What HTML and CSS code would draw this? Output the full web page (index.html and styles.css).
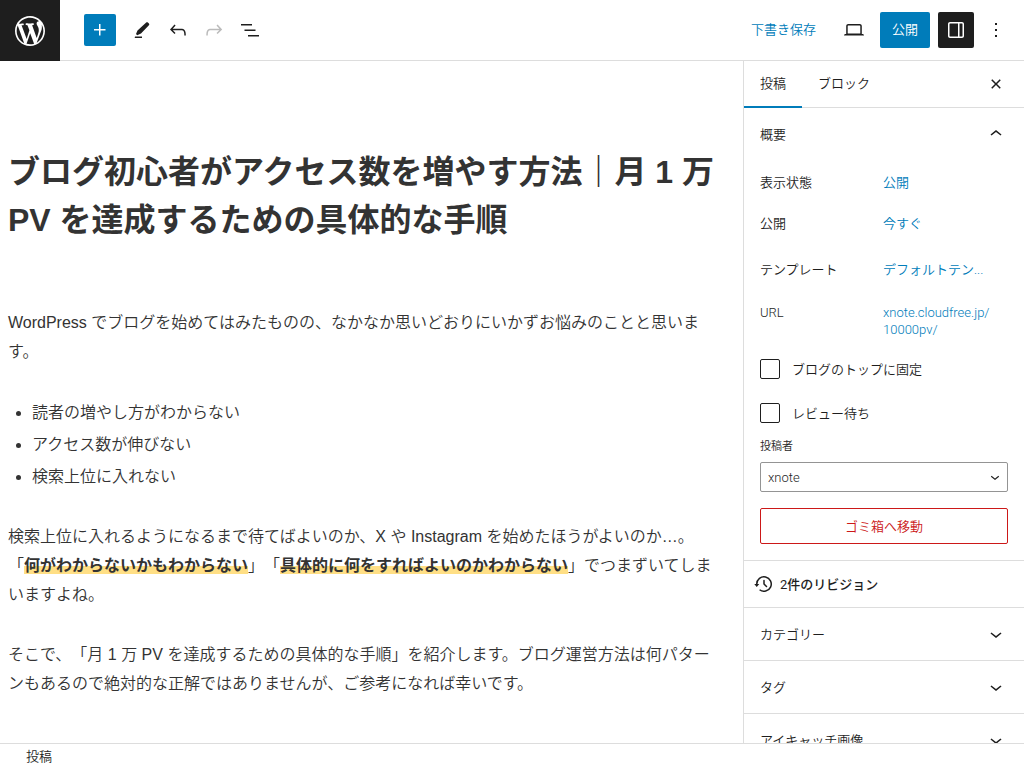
FILE: index.html
```html
<!DOCTYPE html>
<html lang="ja">
<head>
<meta charset="utf-8">
<title>投稿を編集</title>
<link rel="stylesheet" href="styles.css">
</head>
<body>
<div class="editor">
  <header class="header">
    <a class="site-logo" href="#" aria-label="投稿一覧">
      <svg class="logo" viewBox="-2 -2 24 24"><path d="M20 10c0-5.51-4.49-10-10-10C4.48 0 0 4.49 0 10c0 5.52 4.48 10 10 10 5.51 0 10-4.48 10-10zM7.78 15.37L4.37 6.22c.55-.02 1.17-.08 1.17-.08.5-.06.44-1.13-.06-1.11 0 0-1.45.11-2.37.11-.18 0-.37 0-.58-.01C4.12 2.69 6.87 1.11 10 1.11c2.33 0 4.45.87 6.05 2.34-.68-.11-1.65.39-1.65 1.58 0 .74.45 1.36.9 2.1.35.61.55 1.36.55 2.46 0 1.49-1.4 5-1.4 5l-3.03-8.37c.54-.02.82-.17.82-.17.5-.05.44-1.25-.06-1.22 0 0-1.44.12-2.38.12-.87 0-2.33-.12-2.33-.12-.5-.03-.56 1.2-.06 1.22l.92.08 1.26 3.41zM17.41 10c.24-.64.74-1.87.43-4.25.7 1.29 1.05 2.71 1.05 4.25 0 3.29-1.73 6.24-4.4 7.78.97-2.59 1.94-5.2 2.92-7.78zM6.1 18.09C3.12 16.65 1.11 13.53 1.11 10c0-1.3.23-2.48.72-3.59C3.25 10.3 4.67 14.2 6.1 18.09zm4.03-6.63l2.58 6.98c-.86.29-1.76.45-2.71.45-.79 0-1.57-.11-2.29-.33.81-2.38 1.62-4.74 2.42-7.1z"/></svg>
    </a>
    <div class="tools">
      <button class="inserter" type="button" aria-label="ブロックを追加"><svg class="icon" viewBox="0 0 24 24"><path d="M11 12.5V17.5H12.5V12.5H17.5V11H12.5V6H11V11H6V12.5H11Z"/></svg></button>
      <div class="tool-group">
        <button class="icon-button" type="button" aria-label="ツール"><svg class="icon" viewBox="0 0 24 24"><path d="M16.2 4.500c.5-.5 1.200-.5 1.700 0l1 1c.5.5.5 1.200 0 1.700L11 15.500l-3.800 1.700-1.200-1.200L7.500 12.500zM5 18.500h7V20H4.700z"/></svg></button>
        <button class="icon-button" type="button" aria-label="元に戻す"><svg class="icon" viewBox="0 0 24 24"><path d="M18.3 11.7c-.6-.6-1.4-.9-2.3-.9H6.7l2.9-3.3-1.1-1-4.5 5L8.5 16l1-1-2.7-2.7H16c.5 0 .9.2 1.3.5 1 1 1 3.4 1 4.5v.3h1.5v-.2c0-1.5 0-4.3-1.5-5.7z"/></svg></button>
        <button class="icon-button" type="button" aria-label="やり直す" disabled><svg class="icon" viewBox="0 0 24 24"><path d="M15.6 6.5l-1.1 1 2.9 3.3H8c-.9 0-1.7.3-2.3.9-1.4 1.5-1.4 4.2-1.4 5.6v.2h1.5v-.3c0-1.1 0-3.5 1-4.5.3-.3.7-.5 1.3-.5h9.2L14.5 15l1.1 1.1 4.6-4.6-4.6-5z"/></svg></button>
        <button class="icon-button" type="button" aria-label="リスト表示"><svg class="icon" viewBox="0 0 24 24"><path d="M3 6h11v1.5H3V6Zm3.5 5.5h11V13h-11v-1.5ZM21 17H10v1.5h11V17Z"/></svg></button>
      </div>
    </div>
    <div class="actions">
      <button class="save-draft" type="button">下書き保存</button>
      <button class="icon-button" type="button" aria-label="プレビュー"><svg class="icon" viewBox="0 0 24 24"><path d="M20.5 16h-.7V8c0-1.1-.9-2-2-2H6.2c-1.1 0-2 .9-2 2v8h-.7c-.8 0-1.5.7-1.5 1.5h20c0-.8-.7-1.5-1.5-1.5zM5.7 8c0-.3.2-.5.5-.5h11.6c.3 0 .5.2.5.5v7.6H5.7V8z"/></svg></button>
      <button class="publish" type="button">公開</button>
      <button class="icon-button is-pressed" type="button" aria-label="設定"><svg class="icon" viewBox="0 0 24 24"><path d="M18 4H6c-1.1 0-2 .9-2 2v12c0 1.1.9 2 2 2h12c1.1 0 2-.9 2-2V6c0-1.1-.9-2-2-2zm-4 14.5H6c-.3 0-.5-.2-.5-.5V6c0-.3.2-.5.5-.5h8v13zm4.5-.5c0 .3-.2.5-.5.5h-2.5v-13H18c.3 0 .5.2.5.5v12z"/></svg></button>
      <button class="icon-button is-narrow" type="button" aria-label="オプション"><svg class="icon" viewBox="0 0 24 24"><path d="M13 19h-2v-2h2v2zm0-6h-2v-2h2v2zm0-6h-2V5h2v2z"/></svg></button>
    </div>
  </header>

  <div class="body">
    <main class="canvas">
      <h1 class="title">ブログ初心者がアクセス数を増やす方法｜月 1 万<br>PV を達成するための具体的な手順</h1>
      <p class="paragraph">WordPress でブログを始めてはみたものの、なかなか思いどおりにいかずお悩みのことと思いま<br>す。</p>
      <ul class="list">
        <li>読者の増やし方がわからない</li>
        <li>アクセス数が伸びない</li>
        <li>検索上位に入れない</li>
      </ul>
      <p class="paragraph">検索上位に入れるようになるまで待てばよいのか、X や Instagram を始めたほうがよいのか…。<br>「<strong class="marker">何がわからないかもわからない</strong>」「<strong class="marker">具体的に何をすればよいのかわからない</strong>」でつまずいてしま<br>いますよね。</p>
      <p class="paragraph">そこで、「月 1 万 PV を達成するための具体的な手順」を紹介します。ブログ運営方法は何パター<br>ンもあるので絶対的な正解ではありませんが、ご参考になれば幸いです。</p>
    </main>

    <aside class="sidebar">
      <div class="tabs">
        <button class="tab is-active" type="button">投稿</button>
        <button class="tab" type="button">ブロック</button>
        <button class="close" type="button" aria-label="設定を閉じる"><svg class="icon" viewBox="0 0 24 24"><path d="M12 13.06l3.712 3.713 1.061-1.06L13.061 12l3.712-3.712-1.06-1.06L12 10.938 8.288 7.227l-1.061 1.06L10.939 12l-3.712 3.712 1.06 1.061L12 13.061z"/></svg></button>
      </div>
      <section class="summary">
        <button class="panel-toggle" type="button">概要<svg class="icon" viewBox="0 0 24 24"><path d="M6.5 12.4L12 8l5.5 4.4-.9 1.2L12 10l-4.5 3.6-1-1.2z"/></svg></button>
        <div class="summary-content">
          <div class="row"><span class="row-label">表示状態</span><a class="row-value" href="#">公開</a></div>
          <div class="row"><span class="row-label">公開</span><a class="row-value" href="#">今すぐ</a></div>
          <div class="row is-tall"><span class="row-label">テンプレート</span><a class="row-value" href="#">デフォルトテン...</a></div>
          <div class="row is-tall"><span class="row-label">URL</span><a class="row-value" href="#">xnote.cloudfree.jp/<wbr>10000pv/</a></div>
          <label class="check"><input class="checkbox" type="checkbox">ブログのトップに固定</label>
          <label class="check"><input class="checkbox" type="checkbox">レビュー待ち</label>
          <div class="field">
            <label class="field-label" for="author">投稿者</label>
            <div class="select-wrap">
              <select class="select" id="author"><option>xnote</option></select>
              <svg class="select-arrow" viewBox="0 0 24 24"><path d="M17.5 11.6L12 16l-5.5-4.4.9-1.2L12 14l4.5-3.6 1 1.2z"/></svg>
            </div>
          </div>
          <button class="trash" type="button">ゴミ箱へ移動</button>
        </div>
      </section>
      <button class="revisions" type="button"><svg class="icon" viewBox="0 0 24 24"><path d="M5.5 12h1.75l-2.5 3-2.5-3H4a8 8 0 113.134 6.35l.907-1.194A6.5 6.5 0 105.5 12zm9.53 1.97l-2.28-2.28V8.5a.75.75 0 00-1.5 0V12a.747.747 0 00.218.529l1.282-.84-1.28.842 2.5 2.5a.75.75 0 101.06-1.061z"/></svg><span><span class="count">2</span>件のリビジョン</span></button>
      <button class="panel-toggle has-border" type="button">カテゴリー<svg class="icon" viewBox="0 0 24 24"><path d="M17.5 11.6L12 16l-5.5-4.4.9-1.2L12 14l4.5-3.6 1 1.2z"/></svg></button>
      <button class="panel-toggle has-border" type="button">タグ<svg class="icon" viewBox="0 0 24 24"><path d="M17.5 11.6L12 16l-5.5-4.4.9-1.2L12 14l4.5-3.6 1 1.2z"/></svg></button>
      <button class="panel-toggle has-border" type="button">アイキャッチ画像<svg class="icon" viewBox="0 0 24 24"><path d="M17.5 11.6L12 16l-5.5-4.4.9-1.2L12 14l4.5-3.6 1 1.2z"/></svg></button>
    </aside>
  </div>

  <footer class="footer">投稿</footer>
</div>
</body>
</html>
```
FILE: styles.css
```css
*,
*::before,
*::after {
  box-sizing: border-box;
}

body {
  margin: 0;
  color: #1e1e1e;
  background: #fff;
  font: 350 13px/17px Roboto, "Noto Sans CJK JP", sans-serif;
  text-spacing-trim: space-all;
}

button,
select {
  color: inherit;
  font: inherit;
}

button {
  padding: 0;
  border: 0;
  background: none;
}

a {
  color: #007cba;
  text-decoration: none;
}

svg {
  display: block;
  flex: none;
  fill: currentColor;
}

.icon {
  width: 24px;
  height: 24px;
}

.editor {
  display: flex;
  flex-direction: column;
  height: 100vh;
}

/* Top bar */

.header {
  display: flex;
  flex: none;
  align-items: center;
  padding-right: 14px;
  border-bottom: 1px solid #ddd;
}

.site-logo {
  display: flex;
  align-items: center;
  justify-content: center;
  width: 60px;
  height: 61px;
  margin-bottom: -1px;
  color: #fff;
  background: #1e1e1e;
}

.logo {
  width: 36px;
  height: 36px;
}

.tools {
  display: flex;
  flex: 1;
  align-items: center;
  gap: 8px;
  padding-left: 24px;
}

.tool-group {
  display: flex;
}

.inserter {
  display: flex;
  align-items: center;
  justify-content: center;
  width: 32px;
  height: 32px;
  border-radius: 2px;
  color: #fff;
  background: #007cba;
}

.icon-button {
  display: flex;
  align-items: center;
  justify-content: center;
  width: 36px;
  height: 36px;
  border-radius: 2px;
}

.icon-button:disabled {
  color: #bbb;
}

.icon-button.is-narrow {
  width: 28px;
}

.icon-button.is-pressed {
  color: #fff;
  background: #1e1e1e;
}

.actions {
  display: flex;
  align-items: center;
  gap: 8px;
}

.save-draft {
  padding: 0 12px 2px;
  color: #007cba;
}

.publish {
  height: 36px;
  padding: 0 12px 2px;
  border-radius: 2px;
  color: #fff;
  background: #007cba;
}

.body {
  display: flex;
  flex: 1;
  min-height: 0;
}

/* Post content */

.canvas {
  flex: 1;
  min-width: 0;
  padding: 87px 8px 0;
  overflow: hidden;
  color: #333;
  font-family: "Liberation Sans", "Noto Sans CJK JP", sans-serif;
  font-size: 16px;
  line-height: 29px;
  white-space: nowrap;
}

.title {
  margin: 0 0 64px;
  font-size: 32px;
  font-weight: 700;
  line-height: 48px;
}

.paragraph {
  margin: 0 0 31px;
}

.list {
  margin: 0 0 29px;
  padding-left: 24px;
  line-height: 32px;
}

.marker {
  font-weight: 700;
  background: linear-gradient(transparent 55%, #ffdf85 55%);
}

/* Settings sidebar */

.sidebar {
  flex: none;
  width: 281px;
  overflow: hidden;
  border-left: 1px solid #ddd;
}

.tabs {
  display: flex;
  height: 47px;
  padding-right: 16px;
  border-bottom: 1px solid #ddd;
}

.tab {
  height: 47px;
  padding: 0 16px 2px;
}

.tab.is-active {
  padding-bottom: 0;
  border-bottom: 2px solid #007cba;
}

.close {
  margin-left: auto;
}

.panel-toggle {
  display: flex;
  align-items: center;
  justify-content: space-between;
  width: 100%;
  height: 52px;
  padding: 0 16px;
}

.panel-toggle.has-border {
  height: 53px;
  border-top: 1px solid #ddd;
}

.summary-content {
  display: flex;
  flex-direction: column;
  padding: 2px 16px 16px;
}

.row {
  display: flex;
  gap: 8px;
  padding: 12px 0;
}

.row.is-tall {
  padding: 17px 0 9px;
}

.row-label {
  width: 115px;
}

.row-value {
  flex: 1;
  min-width: 0;
}

.check {
  display: flex;
  align-items: center;
  gap: 12px;
  height: 44px;
}

.checkbox {
  width: 20px;
  height: 20px;
  margin: 0;
  border: 1px solid #1e1e1e;
  border-radius: 2px;
  appearance: none;
  background: #fff;
}

.field {
  display: flex;
  flex-direction: column;
  gap: 7px;
  margin: 3px 0 16px;
}

.field-label {
  font-size: 11px;
}

.select-wrap {
  display: grid;
  align-items: center;
}

.select {
  grid-area: 1 / 1;
  width: 100%;
  height: 30px;
  padding: 0 7px;
  border: 1px solid #949494;
  border-radius: 2px;
  appearance: none;
  background: #fff;
}

.select-arrow {
  grid-area: 1 / 1;
  justify-self: end;
  width: 18px;
  height: 18px;
  margin-right: 4px;
  pointer-events: none;
}

.trash {
  height: 36px;
  border: 1px solid #cc1818;
  border-radius: 2px;
  color: #cc1818;
}

.revisions {
  display: flex;
  align-items: center;
  gap: 4px;
  width: 100%;
  height: 47px;
  padding: 0 8px;
  border-top: 1px solid #ddd;
  font-weight: 500;
}

.count {
  font-weight: 400;
}

.footer {
  flex: none;
  height: 25px;
  padding: 4px 26px;
  border-top: 1px solid #ddd;
}
```
